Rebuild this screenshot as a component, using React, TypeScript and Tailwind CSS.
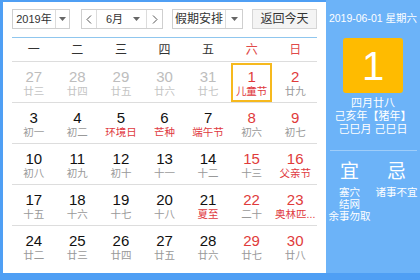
const font = { fontFamily: '"Liberation Sans", "Noto Sans CJK SC", sans-serif' };

type Day = { n: number; lunar: string; dim?: boolean; redNum?: boolean; redLunar?: boolean; selected?: boolean };

const weeks: Day[][] = [
  [
    { n: 27, lunar: '廿三', dim: true },
    { n: 28, lunar: '廿四', dim: true },
    { n: 29, lunar: '廿五', dim: true },
    { n: 30, lunar: '廿六', dim: true },
    { n: 31, lunar: '廿七', dim: true },
    { n: 1, lunar: '儿童节', redNum: true, redLunar: true, selected: true },
    { n: 2, lunar: '廿九', redNum: true },
  ],
  [
    { n: 3, lunar: '初一' },
    { n: 4, lunar: '初二' },
    { n: 5, lunar: '环境日', redLunar: true },
    { n: 6, lunar: '芒种', redLunar: true },
    { n: 7, lunar: '端午节', redLunar: true },
    { n: 8, lunar: '初六', redNum: true },
    { n: 9, lunar: '初七', redNum: true },
  ],
  [
    { n: 10, lunar: '初八' },
    { n: 11, lunar: '初九' },
    { n: 12, lunar: '初十' },
    { n: 13, lunar: '十一' },
    { n: 14, lunar: '十二' },
    { n: 15, lunar: '十三', redNum: true },
    { n: 16, lunar: '父亲节', redNum: true, redLunar: true },
  ],
  [
    { n: 17, lunar: '十五' },
    { n: 18, lunar: '十六' },
    { n: 19, lunar: '十七' },
    { n: 20, lunar: '十八' },
    { n: 21, lunar: '夏至', redLunar: true },
    { n: 22, lunar: '二十', redNum: true },
    { n: 23, lunar: '奥林匹...', redNum: true, redLunar: true },
  ],
  [
    { n: 24, lunar: '廿二' },
    { n: 25, lunar: '廿三' },
    { n: 26, lunar: '廿四' },
    { n: 27, lunar: '廿五' },
    { n: 28, lunar: '廿六' },
    { n: 29, lunar: '廿七', redNum: true },
    { n: 30, lunar: '廿八', redNum: true },
  ],
];

const Caret = () => (
  <svg width="7" height="4" viewBox="0 0 7 4">
    <path d="M0 0h7L3.5 4z" fill="#666" />
  </svg>
);

const Chevron = ({ dir }: { dir: 'l' | 'r' }) => (
  <svg width="6" height="9" viewBox="0 0 6 9">
    <path d={dir === 'l' ? 'M5 0.5L1 4.5l4 4' : 'M1 0.5l4 4-4 4'} stroke="#555" strokeWidth="1" fill="none" />
  </svg>
);

const DayCell = ({ d }: { d: Day }) => {
  const numColor = d.dim ? 'text-[#bdbdbd]' : d.redNum ? 'text-[#df3b3b]' : 'text-[#111]';
  const lunarColor = d.dim ? 'text-[#c4c4c4]' : d.redLunar ? 'text-[#e0393e]' : 'text-[#999]';
  return (
    <div
      className={`mx-[1px] mt-[1px] flex flex-col items-center border-2 pt-[3px] ${
        d.selected ? 'border-[#f6b91e]' : 'border-transparent'
      }`}
    >
      <span className={`text-[15px] leading-[17px] ${numColor}`}>{d.n}</span>
      <span className={`text-[10.5px] leading-[12px] whitespace-nowrap ${lunarColor}`}>{d.lunar}</span>
    </div>
  );
};

export default function App() {
  return (
    <div className="flex h-[280px] w-[420px] bg-[#4f9ff4] pb-[7px]" style={font}>
      <div className="mt-[2px] ml-[3px] w-[323px] bg-white px-[9px] pt-[7px]">
        <div className="flex h-[20px] items-stretch text-[11px] text-[#333]">
          <div className="flex w-[58px] border border-[#cfcfcf]">
            <span className="flex w-[43px] items-center justify-center border-r border-[#dcdcdc]">2019年</span>
            <span className="flex flex-1 items-center justify-center">
              <Caret />
            </span>
          </div>
          <div className="ml-[11px] flex w-[82px] border border-[#cfcfcf]">
            <span className="flex w-[15px] items-center justify-center border-r border-[#dcdcdc]">
              <Chevron dir="l" />
            </span>
            <span className="flex flex-1 items-center justify-between border-r border-[#dcdcdc] pr-[6px] pl-[9px]">
              6月
              <Caret />
            </span>
            <span className="flex w-[15px] items-center justify-center">
              <Chevron dir="r" />
            </span>
          </div>
          <div className="ml-[9px] flex w-[71px] border border-[#cfcfcf]">
            <span className="flex w-[53px] items-center justify-center border-r border-[#dcdcdc] text-[12px]">假期安排</span>
            <span className="flex flex-1 items-center justify-center">
              <Caret />
            </span>
          </div>
          <div className="ml-[9px] flex w-[65px] items-center justify-center border border-[#d6d6d6] bg-[#f4f4f4] text-[12px]">
            返回今天
          </div>
        </div>

        <div className="mt-[8px] h-px bg-[#8fc6ee]" />

        <div className="grid h-[24px] grid-cols-7 border-b border-[#dddddd] text-[12px]">
          {['一', '二', '三', '四', '五', '六', '日'].map((w, i) => (
            <div key={w} className={`flex items-center justify-center ${i > 4 ? 'text-[#e04a4a]' : 'text-[#333]'}`}>
              {w}
            </div>
          ))}
        </div>

        {weeks.map((week, wi) => (
          <div
            key={wi}
            className={`grid h-[41px] grid-cols-7 ${wi < weeks.length - 1 ? 'border-b border-[#dddddd]' : ''}`}
          >
            {week.map((d, di) => (
              <DayCell key={di} d={d} />
            ))}
          </div>
        ))}
      </div>

      <div className="flex flex-1 flex-col items-center bg-[#6cb3f8] text-white">
        <div className="mt-[10px] text-[10.5px] leading-[16px] whitespace-nowrap">2019-06-01 星期六</div>
        <div className="mt-[12px] flex h-[55px] w-[60px] items-center justify-center rounded-[3px] bg-[#ffbb00] text-[40px] leading-none">
          1
        </div>
        <div className="mt-[4px] flex flex-col items-center text-[11px] leading-[13px]">
          <span>四月廿八</span>
          <span className="whitespace-nowrap">己亥年【猪年】</span>
          <span>己巳月 己巳日</span>
        </div>
        <div className="mt-[14px] h-px w-[87px] bg-[#9fcdf9]" />
        <div className="mt-[10px] grid w-full grid-cols-2">
          <div className="flex flex-col items-center">
            <span className="text-[19px] leading-[22px]">宜</span>
            <div className="mt-[3px] flex flex-col items-center text-[10.5px] leading-[12px] whitespace-nowrap">
              <span>塞穴</span>
              <span>结网</span>
              <span>余事勿取</span>
            </div>
          </div>
          <div className="flex flex-col items-center">
            <span className="text-[19px] leading-[22px]">忌</span>
            <div className="mt-[3px] flex flex-col items-center text-[10.5px] leading-[12px] whitespace-nowrap">
              <span>诸事不宜</span>
            </div>
          </div>
        </div>
      </div>
    </div>
  );
}
